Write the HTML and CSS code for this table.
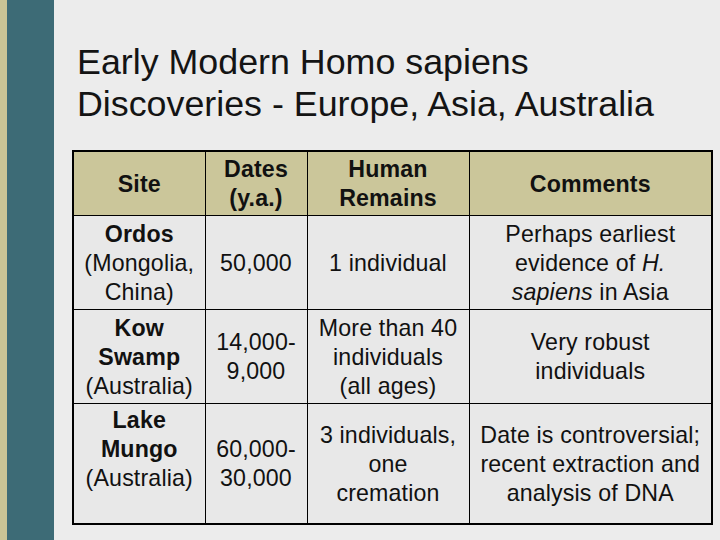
FILE: index.html
```html
<!DOCTYPE html>
<html>
<head>
<meta charset="utf-8">
<link rel="stylesheet" href="styles.css">
</head>
<body>
<div class="slide">
  <div class="stripe-khaki"></div>
  <div class="stripe-teal"></div>
  <div class="content">
    <h1 class="title">Early Modern Homo sapiens<br>Discoveries - Europe, Asia, Australia</h1>
    <table class="data">
      <colgroup>
        <col class="c1"><col class="c2"><col class="c3"><col class="c4">
      </colgroup>
      <thead>
        <tr class="hrow">
          <th>Site</th>
          <th>Dates<br>(y.a.)</th>
          <th>Human<br>Remains</th>
          <th>Comments</th>
        </tr>
      </thead>
      <tbody>
        <tr class="r1">
          <td><b>Ordos</b><br>(Mongolia,<br>China)</td>
          <td>50,000</td>
          <td>1 individual</td>
          <td>Perhaps earliest<br>evidence of <i>H.</i><br><i>sapiens</i> in Asia</td>
        </tr>
        <tr class="r2">
          <td><b>Kow<br>Swamp</b><br>(Australia)</td>
          <td>14,000-<br>9,000</td>
          <td>More than 40<br>individuals<br>(all ages)</td>
          <td>Very robust<br>individuals</td>
        </tr>
        <tr class="r3">
          <td><b>Lake<br>Mungo</b><br>(Australia)<br>&nbsp;</td>
          <td>60,000-<br>30,000</td>
          <td>3 individuals,<br>one<br>cremation</td>
          <td>Date is controversial;<br>recent extraction and<br>analysis of DNA</td>
        </tr>
      </tbody>
    </table>
  </div>
</div>
</body>
</html>
```
FILE: styles.css
```css
html, body {
  margin: 0;
  padding: 0;
}
body {
  width: 720px;
  height: 540px;
  overflow: hidden;
  background: #ececec;
  font-family: "Liberation Sans", Arial, sans-serif;
  color: #111;
}
.slide {
  display: flex;
  width: 720px;
  height: 540px;
}
.stripe-khaki {
  width: 7px;
  background: #c9c496;
  flex: none;
}
.stripe-teal {
  width: 47px;
  background: #3d6b76;
  flex: none;
}
.content {
  flex: 1;
  padding-left: 18px;
}
.title {
  margin: 42px 0 0 5px;
  font-weight: normal;
  font-size: 35.8px;
  line-height: 41.5px;
  color: #141414;
}
.data {
  margin-top: 25px;
  border-collapse: collapse;
  border: 2px solid #000;
  table-layout: fixed;
  width: 639px;
  font-size: 23.2px;
  line-height: 29px;
  letter-spacing: 0.15px;
}
.c1 { width: 132px; }
.c2 { width: 102px; }
.c3 { width: 162px; }
.c4 { width: 243px; }
.data th, .data td {
  border: 1px solid #000;
  text-align: center;
  vertical-align: middle;
  padding: 2px 0 0;
  background: #e8e8e8;
}
.data th {
  background: #cbc69a;
  font-weight: bold;
}
.hrow { height: 64px; }
.r1 { height: 94px; }
.r2 { height: 94px; }
.r3 { height: 121px; }
```
